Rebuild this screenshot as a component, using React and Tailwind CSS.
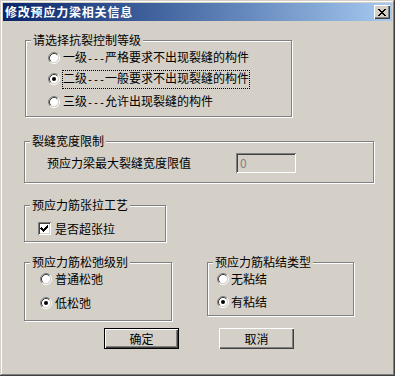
import React from "react";

const FONT = "font-['Noto_Sans_CJK_SC',sans-serif]";

function Radio({ checked }) {
  return (
    <svg width="12" height="12" viewBox="0 0 12 12" className="shrink-0 block">
      <circle cx="6" cy="6" r="4.2" fill="#fff" />
      <path d="M2.11 9.89A5.5 5.5 0 0 1 9.89 2.11" stroke="#808080" fill="none" />
      <path d="M9.89 2.11A5.5 5.5 0 0 1 2.11 9.89" stroke="#fff" fill="none" />
      <path d="M2.82 9.18A4.5 4.5 0 0 1 9.18 2.82" stroke="#404040" fill="none" />
      <path d="M9.18 2.82A4.5 4.5 0 0 1 2.82 9.18" stroke="#d4d0c8" fill="none" />
      {checked && <circle cx="6" cy="6" r="2" fill="#000" />}
    </svg>
  );
}

function Checkbox({ checked }) {
  return (
    <div className="w-[13px] h-[13px] shrink-0 bg-white shadow-[inset_1px_1px_0_#808080,inset_-1px_-1px_0_#fff,inset_2px_2px_0_#404040,inset_-2px_-2px_0_#d4d0c8]">
      {checked && (
        <svg width="13" height="13" viewBox="0 0 13 13" className="block" shapeRendering="crispEdges">
          <path d="M3 5h1v1h1v1h1v-1h1v-1h1v-1h1v-1h1v3h-1v1h-1v1h-1v1h-1v1h-1v-1h-1v-1h-1v-1h-1z" fill="#000" />
        </svg>
      )}
    </div>
  );
}

function Group({ title, className, children }) {
  return (
    <div
      className={`relative shrink-0 border border-[#808080] shadow-[inset_1px_1px_0_#fff,1px_1px_0_#fff] ${className}`}
    >
      <span className="absolute left-[5px] top-[-7px] bg-[#d4d0c8] px-[2px] text-[12px] leading-[12px] whitespace-nowrap">
        {title}
      </span>
      {children}
    </div>
  );
}

function Dash({ n }) {
  return <span className="font-['Liberation_Mono',monospace] text-[10px]">{"-".repeat(n)}</span>;
}

function Button({ children, isDefault, className }) {
  return (
    <div
      className={`w-[75px] h-[21px] flex items-center justify-center text-[12px] leading-[12px] bg-[#d4d0c8] ${
        isDefault
          ? "border border-black shadow-[inset_1px_1px_0_#fff,inset_-1px_-1px_0_#404040,inset_-2px_-2px_0_#808080]"
          : "shadow-[inset_1px_1px_0_#fff,inset_-1px_-1px_0_#404040,inset_-2px_-2px_0_#808080]"
      } ${className || ""}`}
    >
      {children}
    </div>
  );
}

export default function App() {
  return (
    <div
      className={`w-[395px] h-[376px] bg-[#d4d0c8] p-[3px] flex flex-col text-black ${FONT} shadow-[inset_-1px_-1px_0_#404040,inset_1px_1px_0_#d4d0c8,inset_-2px_-2px_0_#808080,inset_2px_2px_0_#fff]`}
    >
      {/* Title bar */}
      <div className="h-[18px] shrink-0 flex items-center justify-between pl-[2px] pr-[2px] bg-linear-to-r from-[#0a246a] to-[#a6caf0]">
        <span className="text-white font-bold text-[12px] leading-[12px] tracking-[0.8px]">修改预应力梁相关信息</span>
        <div className="w-[16px] h-[14px] bg-[#d4d0c8] shadow-[inset_1px_1px_0_#fff,inset_-1px_-1px_0_#404040,inset_-2px_-2px_0_#808080] flex items-center justify-center">
          <svg width="8" height="7" viewBox="0 0 8 7" shapeRendering="crispEdges" className="block mr-[1px]">
            <path
              d="M0 0h2v1h1v1h2v-1h1v-1h2v1h-1v1h-1v1h-1v1h1v1h1v1h1v1h-2v-1h-1v-1h-2v1h-1v1h-2v-1h1v-1h1v-1h1v-1h-1v-1h-1v-1h-1z"
              fill="#000"
            />
          </svg>
        </div>
      </div>

      {/* Body */}
      <div className="flex flex-col text-[12px] leading-[12px]">
        <Group title="请选择抗裂控制等级" className="ml-[22px] mt-[19px] w-[267px] h-[77px]">
          <div className="flex flex-col pl-[22px] pt-[9px]">
            <div className="flex items-center h-[16px]">
              <Radio />
              <span className="ml-[3px]">
                一级<Dash n={3} />严格要求不出现裂缝的构件
              </span>
            </div>
            <div className="flex items-center h-[16px] mt-[5px]">
              <Radio checked />
              <span className="ml-[3px] leading-[14px] outline-1 outline-dotted outline-black">
                二级<Dash n={3} />一般要求不出现裂缝的构件
              </span>
            </div>
            <div className="flex items-center h-[16px] mt-[7px]">
              <Radio />
              <span className="ml-[3px]">
                三级<Dash n={3} />允许出现裂缝的构件
              </span>
            </div>
          </div>
        </Group>

        <Group title="裂缝宽度限制" className="ml-[21px] mt-[24px] w-[350px] h-[42px]">
          <div className="flex items-center pl-[22px] pt-[11px]">
            <span>预应力梁最大裂缝宽度限值</span>
            <div className="ml-[45px] w-[60px] h-[20px] flex items-center pl-[4px] text-[#808080] bg-[#d4d0c8] shadow-[inset_1px_1px_0_#808080,inset_-1px_-1px_0_#fff,inset_2px_2px_0_#404040,inset_-2px_-2px_0_#d4d0c8]">
              0
            </div>
          </div>
        </Group>

        <Group title="预应力筋张拉工艺" className="ml-[21px] mt-[22px] w-[142px] h-[37px]">
          <div className="flex items-center pl-[13px] pt-[16px]">
            <Checkbox checked />
            <span className="ml-[4px]">是否超张拉</span>
          </div>
        </Group>

        <div className="flex items-start mt-[20px]">
          <Group title="预应力筋松弛级别" className="ml-[21px] w-[148px] h-[59px]">
            <div className="flex flex-col pl-[15px] pt-[8px]">
              <div className="flex items-center h-[16px]">
                <Radio />
                <span className="ml-[3px]">普通松弛</span>
              </div>
              <div className="flex items-center h-[16px] mt-[8px]">
                <Radio checked />
                <span className="ml-[3px]">低松弛</span>
              </div>
            </div>
          </Group>
          <Group title="预应力筋粘结类型" className="ml-[35px] w-[147px] h-[54px]">
            <div className="flex flex-col pl-[9px] pt-[8px]">
              <div className="flex items-center h-[16px]">
                <Radio />
                <span className="ml-[2px]">无粘结</span>
              </div>
              <div className="flex items-center h-[16px] mt-[7px]">
                <Radio checked />
                <span className="ml-[2px]">有粘结</span>
              </div>
            </div>
          </Group>
        </div>

        <div className="flex mt-[7px]">
          <Button isDefault className="ml-[101px]">确定</Button>
          <Button className="ml-[40px]">取消</Button>
        </div>
      </div>
    </div>
  );
}
